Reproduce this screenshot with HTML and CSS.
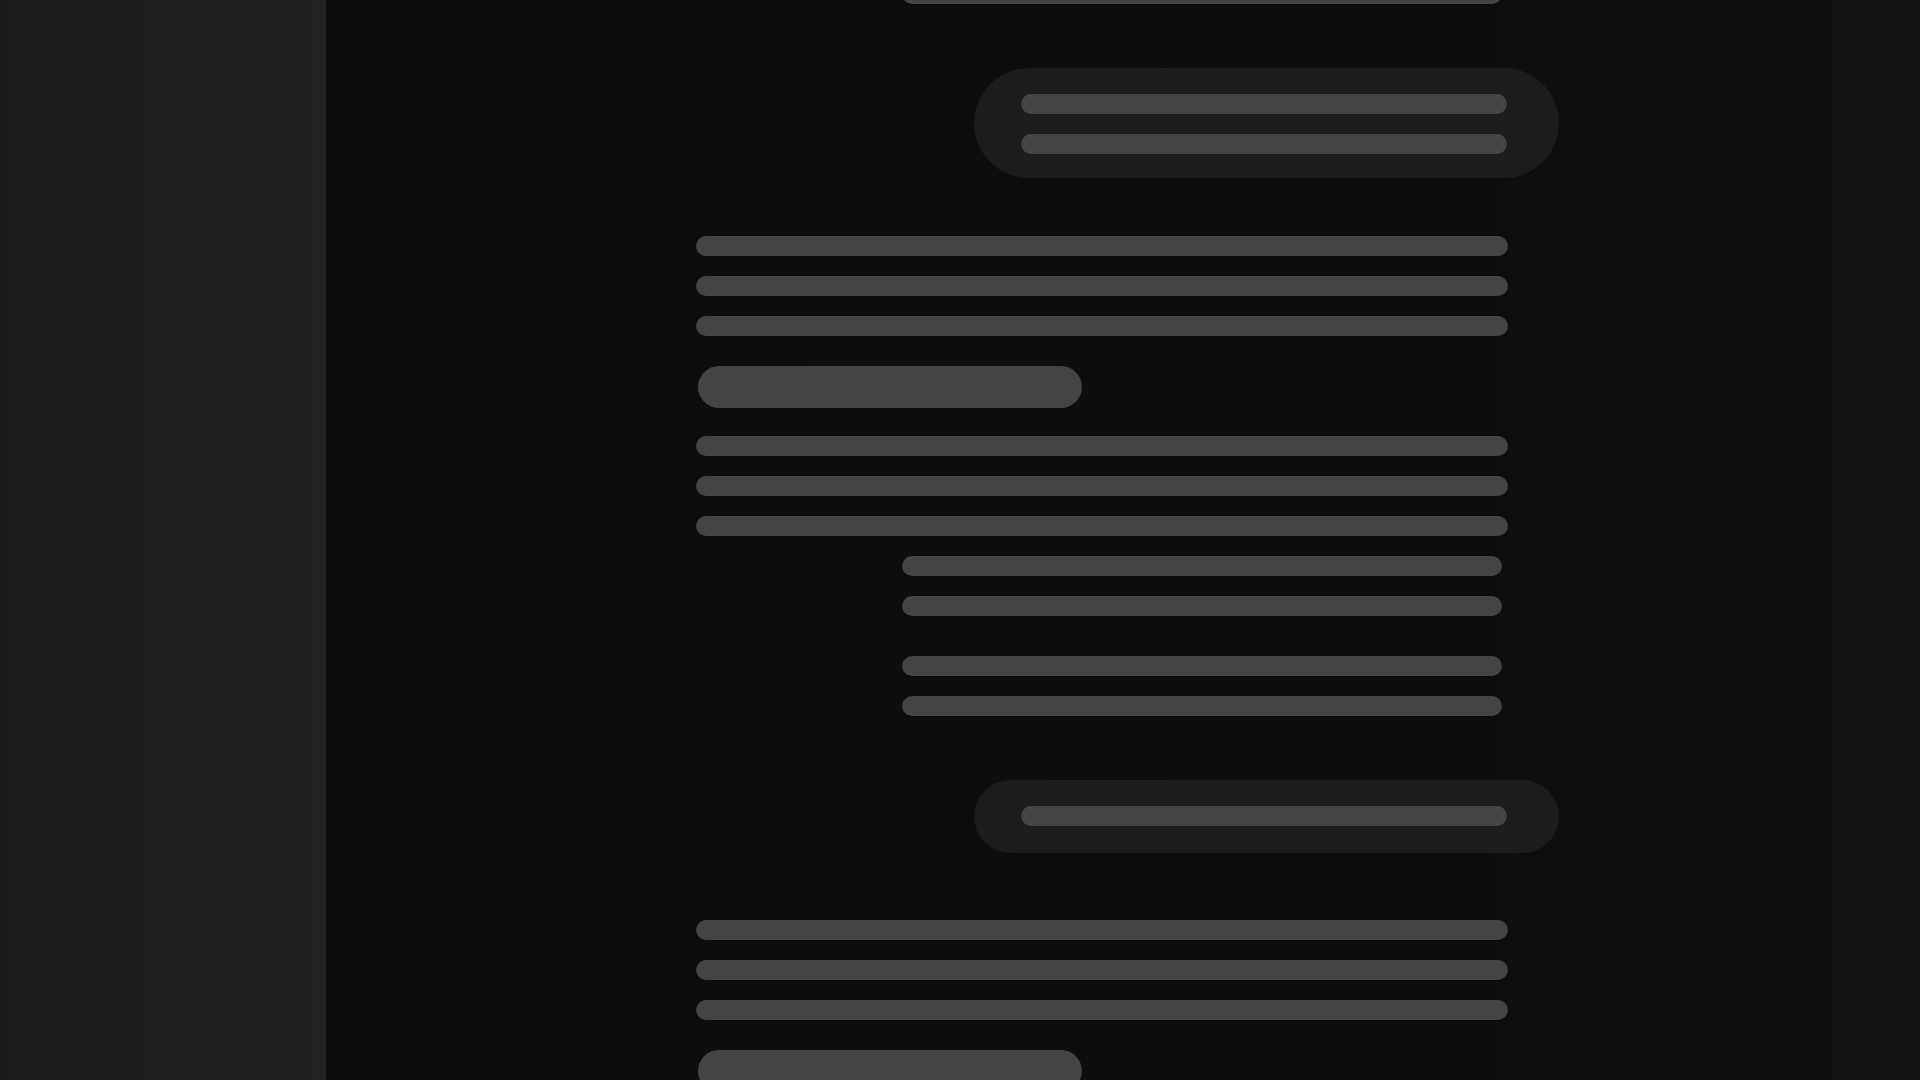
FILE: index.html
```html
<!DOCTYPE html>
<html lang="en">
<head>
<meta charset="utf-8">
<title>Chat loading</title>
<link rel="stylesheet" href="styles.css">
</head>
<body>
<div class="app">
  <aside class="sidebar"></aside>
  <main class="main">
    <div class="thread">
      <div class="list list-first">
        <div class="bar bar-indent"></div>
      </div>

      <div class="bubble bubble-two">
        <div class="bar bar-bubble"></div>
        <div class="bar bar-bubble"></div>
      </div>

      <div class="para para-after-bubble">
        <div class="bar bar-full"></div>
        <div class="bar bar-full"></div>
        <div class="bar bar-full"></div>
      </div>

      <div class="pill"></div>

      <div class="para para-after-pill">
        <div class="bar bar-full"></div>
        <div class="bar bar-full"></div>
        <div class="bar bar-full"></div>
      </div>

      <div class="list">
        <div class="bar bar-indent"></div>
        <div class="bar bar-indent"></div>
      </div>
      <div class="list list-next">
        <div class="bar bar-indent"></div>
        <div class="bar bar-indent"></div>
      </div>

      <div class="bubble bubble-one">
        <div class="bar bar-bubble"></div>
      </div>

      <div class="para para-after-bubble2">
        <div class="bar bar-full"></div>
        <div class="bar bar-full"></div>
        <div class="bar bar-full"></div>
      </div>

      <div class="pill"></div>
    </div>
  </main>
</div>
</body>
</html>
```
FILE: styles.css
```css
* { box-sizing: border-box; }

html, body {
  margin: 0;
  padding: 0;
  width: 100%;
  height: 100%;
  overflow: hidden;
  background: #0e0e0e;
  font-family: "Inter", "Liberation Sans", sans-serif;
}

.app {
  display: flex;
  width: 1920px;
  height: 1080px;
}

.sidebar {
  flex: 0 0 326px;
  height: 100%;
  background: linear-gradient(90deg, #1b1b1b 0%, #1e1e1e 60%, #222222 100%);
}

.main {
  flex: 1;
  height: 100%;
  overflow: hidden;
  padding-left: 370px;
  background: linear-gradient(90deg, #0d0d0d 0%, #0e0e0e 70%, #111111 100%);
}

.thread {
  width: 863px;
  display: flex;
  flex-direction: column;
}

.bar {
  height: 20px;
  border-radius: 10px;
  background: #444444;
}

.bar-full { width: 812px; }
.bar-indent { width: 600px; margin-left: 206px; }
.bar-bubble { width: 486px; }

.para,
.list {
  display: flex;
  flex-direction: column;
  gap: 20px;
}

.list-first { margin-top: -16px; }
.list { margin-top: 20px; }
.list-first { margin-top: -16px; }
.list-next { margin-top: 40px; }

.bubble {
  align-self: flex-end;
  width: 585px;
  background: #1c1c1c;
  border-radius: 56px;
  display: flex;
  flex-direction: column;
  gap: 20px;
  padding: 26px 52px 24px 47px;
}

.bubble-two { margin-top: 64px; }
.bubble-one {
  margin-top: 64px;
  padding: 26px 52px 27px 47px;
  border-radius: 37px;
}

.para-after-bubble { margin-top: 58px; }
.para-after-pill { margin-top: 28px; }
.para-after-bubble2 { margin-top: 67px; }

.pill {
  width: 384px;
  height: 42px;
  margin-left: 2px;
  margin-top: 30px;
  border-radius: 21px;
  background: #444444;
  flex-shrink: 0;
}
```
